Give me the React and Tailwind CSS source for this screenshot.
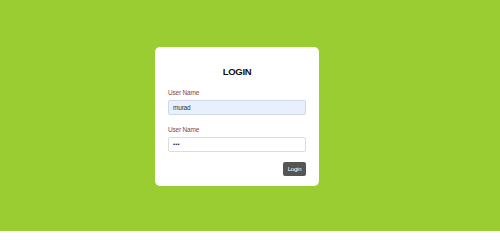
const LoginPage = () => {
  return (
    <div
      className="h-[231px] bg-[#9acd32] pl-[155px] pt-[47px]"
      style={{ fontFamily: '"Liberation Sans", Arial, sans-serif' }}
    >
      {/* Card */}
      <form className="w-[164px] h-[139px] bg-white rounded-[5px] pt-[20px] px-[13px] flex flex-col">
        <h2 className="text-[9.5px] leading-[10px] font-bold text-center text-[#111] tracking-[-0.3px]">
          LOGIN
        </h2>

        <label className="mt-[12px] text-[6.5px] leading-[7px] text-[#864646] tracking-[-0.2px]">
          User Name
        </label>
        <div className="mt-[4px] h-[15px] rounded-[2px] border border-[#cfd8e6] bg-[#e8f0fe] flex items-center px-[4px] text-[6.5px] text-[#333] tracking-[-0.2px]">
          murad
        </div>

        <label className="mt-[11px] text-[6.5px] leading-[7px] text-[#864646] tracking-[-0.2px]">
          User Name
        </label>
        <div className="mt-[4px] h-[15px] rounded-[2px] border border-[#dcdcdc] bg-white flex items-center px-[4px] text-[6px] text-[#222] tracking-[0.2px]">
          •••
        </div>

        {/* Actions */}
        <div className="mt-[10px] flex justify-end">
          <button
            type="button"
            className="w-[23px] h-[14px] rounded-[2px] bg-[#555] text-white text-[6px] leading-none tracking-[-0.2px]"
          >
            Login
          </button>
        </div>
      </form>
    </div>
  );
};

export default function App() {
  return <LoginPage />;
}
